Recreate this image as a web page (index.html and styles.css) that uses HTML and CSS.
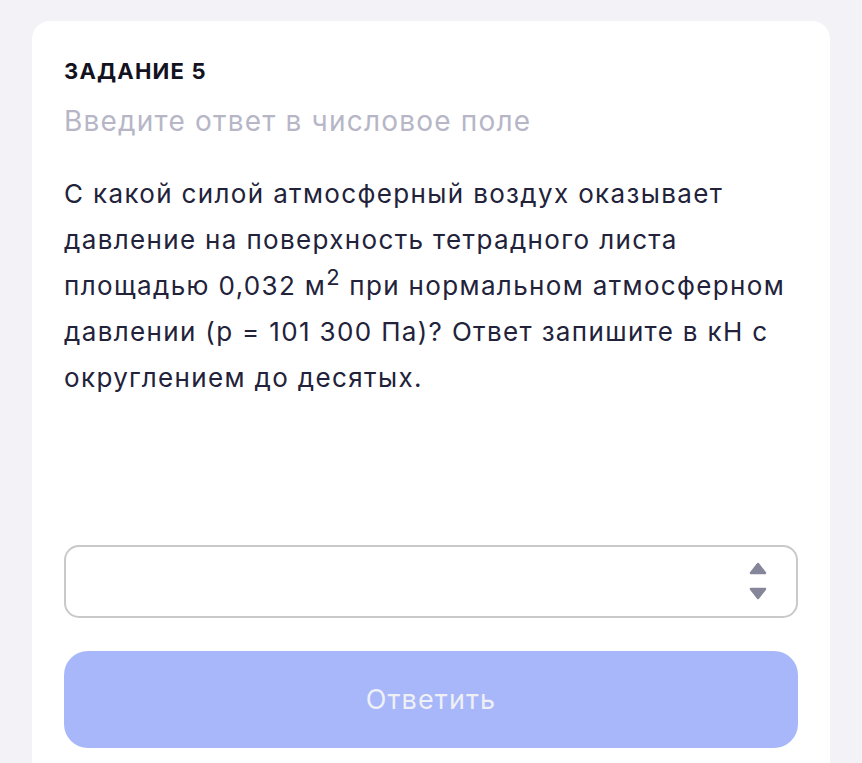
FILE: index.html
```html
<!doctype html>
<html lang="ru">
<head>
  <meta charset="utf-8">
  <meta name="viewport" content="width=device-width, initial-scale=1.0">
  <title>Задание 5</title>
  <link rel="stylesheet" href="styles.css">
</head>
<body>
  <div class="task-card">
    <h2 class="task-title">ЗАДАНИЕ 5</h2>
    <p class="task-hint">Введите ответ в числовое поле</p>

    <p class="task-text">
      С какой силой атмосферный воздух оказывает давление на поверхность тетрадного листа площадью 0,032 м<sup>2</sup> при нормальном атмосферном давлении (p = 101 300 Па)? Ответ запишите в кН с округлением до десятых.
    </p>

    <form class="answer-form">
      <div class="number-field">
        <input type="text" class="number-input" inputmode="decimal">
        <svg class="spinner" width="18" height="38" viewBox="0 0 18 38">
          <path d="M9 2 L16 11 L2 11 Z" />
          <path d="M2 27 L16 27 L9 36 Z" />
        </svg>
      </div>
      <button type="submit" class="submit-btn" disabled>Ответить</button>
    </form>
  </div>
</body>
</html>
```

FILE: styles.css
```css
:root {
  --bg: #f2f2f7;
  --text: #22223a;
  --muted: #b6b6c7;
  --border: #c9c9c9;
  --arrow: #86869a;
  --primary-light: #a7b7f9;
}

* {
  margin: 0;
  padding: 0;
  box-sizing: border-box;
}

body {
  font-family: Inter, "Noto Sans", sans-serif;
  background: var(--bg);
  color: var(--text);
  padding: 21px 32px 0 32px;
  height: 100vh;
  overflow: hidden;
}

.task-card {
  background: white;
  border-radius: 18px 18px 0 0;
  padding: 37px 32px 0 32px;
  height: 100%;
}

.task-title {
  font-size: 22px;
  font-weight: 700;
  letter-spacing: 1.2px;
  line-height: 26px;
  color: #121220;
}

.task-hint {
  font-size: 28px;
  letter-spacing: 1.2px;
  color: var(--muted);
  margin-top: 20px;
  line-height: 34px;
}

.task-text {
  font-size: 26px;
  letter-spacing: 1.35px;
  line-height: 46px;
  margin-top: 33px;
  max-width: 734px;
}

.task-text sup {
  font-size: 22px;
  letter-spacing: 1px;
  line-height: 0;
  vertical-align: 10px;
}

.answer-form {
  margin-top: 144px;
  display: flex;
  flex-direction: column;
  gap: 33px;
}

.number-field {
  position: relative;
}

.number-input {
  display: block;
  width: 100%;
  height: 73px;
  border: 2px solid var(--border);
  border-radius: 15px;
  font-size: 26px;
  padding: 0 60px 0 20px;
  font-family: inherit;
  outline: none;
}

.spinner {
  position: absolute;
  right: 31px;
  top: 17px;
  fill: var(--arrow);
  stroke: var(--arrow);
  stroke-width: 2.5;
  stroke-linejoin: round;
}

.submit-btn {
  height: 97px;
  border: none;
  border-radius: 24px;
  background: var(--primary-light);
  color: #eef0f6;
  font-family: Inter, sans-serif;
  font-size: 27px;
  letter-spacing: 1.1px;
  cursor: default;
}
```
